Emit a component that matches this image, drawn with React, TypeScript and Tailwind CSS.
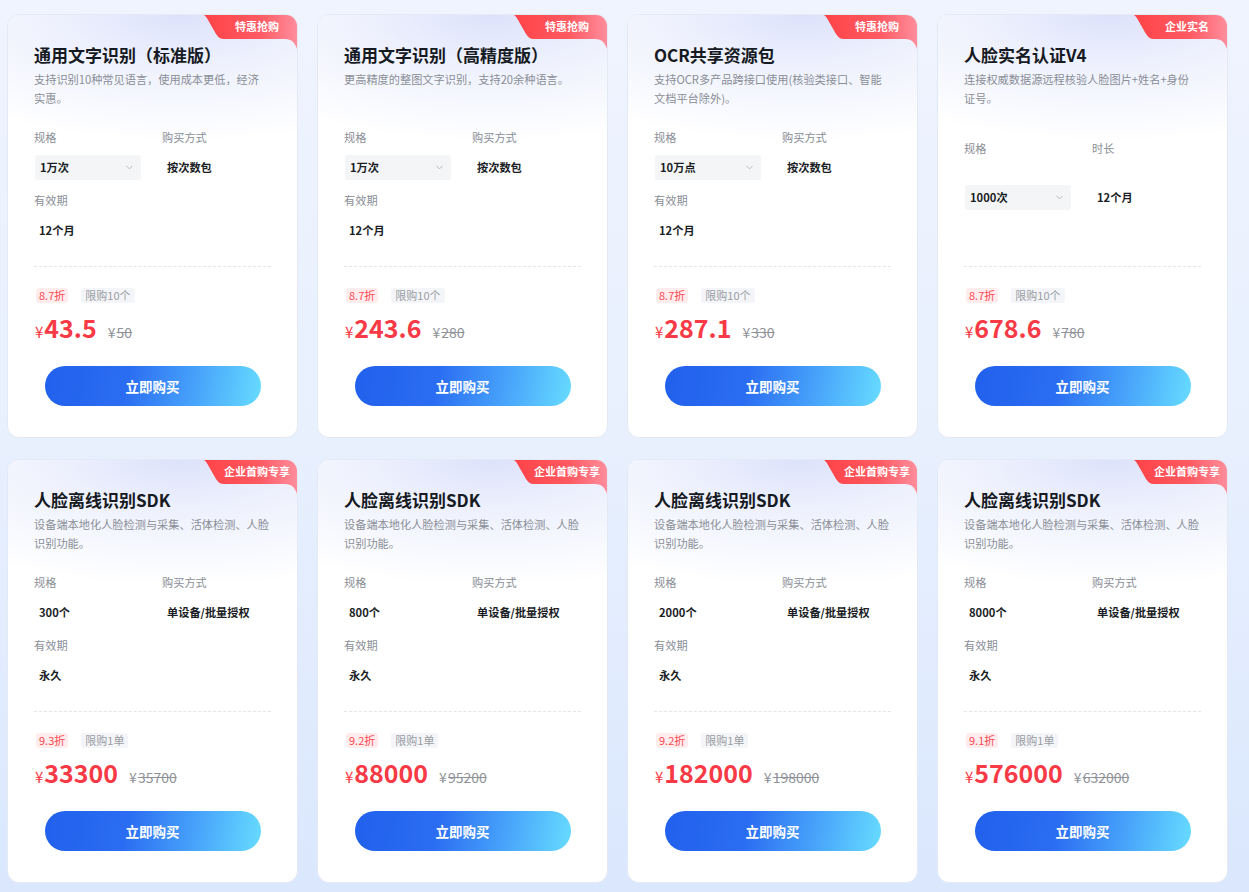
import { ChevronDown } from "lucide-react";

/* ─── product data ─── */
type Product = {
  badge: string;
  title: string;
  desc: string;
  specs: { label: string; value: string; select?: boolean }[];
  discount: string;
  limit: string;
  price: string;
  origin: string;
  wide?: boolean;
};

const products: Product[] = [
  {
    badge: "特惠抢购",
    title: "通用文字识别（标准版）",
    desc: "支持识别10种常见语言，使用成本更低，经济实惠。",
    specs: [
      { label: "规格", value: "1万次", select: true },
      { label: "购买方式", value: "按次数包" },
      { label: "有效期", value: "12个月" },
    ],
    discount: "8.7折",
    limit: "限购10个",
    price: "43.5",
    origin: "50",
  },
  {
    badge: "特惠抢购",
    title: "通用文字识别（高精度版）",
    desc: "更高精度的整图文字识别，支持20余种语言。",
    specs: [
      { label: "规格", value: "1万次", select: true },
      { label: "购买方式", value: "按次数包" },
      { label: "有效期", value: "12个月" },
    ],
    discount: "8.7折",
    limit: "限购10个",
    price: "243.6",
    origin: "280",
  },
  {
    badge: "特惠抢购",
    title: "OCR共享资源包",
    desc: "支持OCR多产品跨接口使用(核验类接口、智能文档平台除外)。",
    specs: [
      { label: "规格", value: "10万点", select: true },
      { label: "购买方式", value: "按次数包" },
      { label: "有效期", value: "12个月" },
    ],
    discount: "8.7折",
    limit: "限购10个",
    price: "287.1",
    origin: "330",
  },
  {
    badge: "企业实名",
    title: "人脸实名认证V4",
    desc: "连接权威数据源远程核验人脸图片+姓名+身份证号。",
    specs: [
      { label: "规格", value: "1000次", select: true },
      { label: "时长", value: "12个月" },
    ],
    discount: "8.7折",
    limit: "限购10个",
    price: "678.6",
    origin: "780",
    wide: true,
  },
  ...[
    ["300个", "9.3折", "33300", "35700"],
    ["800个", "9.2折", "88000", "95200"],
    ["2000个", "9.2折", "182000", "198000"],
    ["8000个", "9.1折", "576000", "632000"],
  ].map(([spec, discount, price, origin]) => ({
    badge: "企业首购专享",
    title: "人脸离线识别SDK",
    desc: "设备端本地化人脸检测与采集、活体检测、人脸识别功能。",
    specs: [
      { label: "规格", value: spec },
      { label: "购买方式", value: "单设备/批量授权" },
      { label: "有效期", value: "永久" },
    ],
    discount,
    limit: "限购1单",
    price,
    origin,
  })),
];

/* ─── corner ribbon ─── */
function Ribbon({ text }: { text: string }) {
  return (
    <div className="absolute right-0 top-0 w-[94px] h-[34px]">
      <svg width="94" height="34" viewBox="0 0 94 34" className="absolute inset-0">
        <defs>
          <linearGradient id="rib" x1="0" y1="0" x2="1" y2="0">
            <stop offset="0" stopColor="#ff4347" />
            <stop offset="0.6" stopColor="#ff5a62" />
            <stop offset="1" stopColor="#ff8d9c" />
          </linearGradient>
        </defs>
        <path
          d="M0 0 H94 V34 C92 28 89 24 82 24 H21 C17 24 15 22 13 19 L5 5 C3.5 2 2 0 0 0 Z"
          fill="url(#rib)"
        />
      </svg>
      <div className="absolute left-[14px] right-0 top-0 h-[22px] flex items-center justify-center text-white text-[11px] font-bold leading-none">
        {text}
      </div>
    </div>
  );
}

/* ─── single card ─── */
function ProductCard({ p }: { p: Product }) {
  return (
    <div className="relative h-[424px] rounded-[12px] bg-white border border-[#e4eaf5] overflow-hidden">
      <div className="absolute inset-x-0 top-0 h-[150px] bg-[radial-gradient(ellipse_110%_85%_at_60%_0%,#dce2fb_0%,#eef1fd_40%,#ffffff_100%)]" />
      <Ribbon text={p.badge} />

      <div className="relative flex flex-col px-[26px] pt-[28px]">
        <h3 className="text-[17px] leading-[24px] font-bold text-[#161a23]">{p.title}</h3>
        <p className="mt-[3px] h-[38px] w-[235.6px] text-[11.2px] leading-[19px] text-[#8a8e96]">{p.desc}</p>

        {/* specs */}
        <div className="h-[137px] mt-[21px]">
          <div
            className={`grid grid-cols-[128px_1fr] ${
              p.wide ? "pt-[11px] gap-y-[12px]" : "gap-y-[12px]"
            }`}
          >
            {p.specs.map((s) => (
              <div key={s.label} className={`flex flex-col ${p.wide ? "gap-[29px]" : "gap-[10px]"}`}>
                <span className="text-[11.2px] leading-[16px] text-[#8a8e96]">{s.label}</span>
                {s.select ? (
                  <div className="w-[106px] h-[25px] ml-px rounded-[3px] bg-[#f3f5f6] flex items-center justify-between pl-[5px] pr-[6px]">
                    <span className="text-[11.2px] font-bold text-[#1b1e25]">{s.value}</span>
                    <ChevronDown className="size-[11px] text-[#a3a7ae]" strokeWidth={1.6} />
                  </div>
                ) : (
                  <div className="h-[25px] flex items-center pl-[5px] text-[11.2px] font-bold text-[#1b1e25]">
                    {s.value}
                  </div>
                )}
              </div>
            ))}
          </div>
        </div>

        <div className="border-t border-dashed border-[#e2e5ea]" />

        {/* price */}
        <div className="mt-[21px] flex items-center gap-[13px] pl-[2px]">
          <span className="h-[15px] px-[3px] rounded-[3px] bg-[#ffeced] text-[#fb4a52] text-[11px] leading-[15px]">
            {p.discount}
          </span>
          <span className="h-[15px] px-[4px] rounded-[3px] bg-[#f4f5f8] text-[#9a9da3] text-[11px] leading-[15px]">
            {p.limit}
          </span>
        </div>
        <div className="mt-[8px] flex items-baseline pl-[1px] h-[32px]">
          <span className="text-[15px] text-[#f73a45] mr-[1px]">¥</span>
          <span className="text-[25px] font-bold text-[#f73a45] leading-[32px]">{p.price}</span>
          <span className="ml-[11px] mr-[1px] text-[14px] text-[#8f9299]">¥</span>
          <span className="text-[14px] text-[#8f9299] line-through">{p.origin}</span>
        </div>

        <button className="mt-[23px] self-center w-[216px] h-[40px] rounded-full bg-[linear-gradient(100deg,#2160ec_0%,#2b6df2_38%,#4aa8fb_72%,#67dcff_100%)] text-white text-[13.5px] font-bold">
          立即购买
        </button>
      </div>
    </div>
  );
}

export default function App() {
  return (
    <div
      className="min-h-[892px] w-full bg-[linear-gradient(180deg,#eff4fe_0%,#e8f0fe_50%,#dae7fd_100%)] pl-[7px] pt-[14px]"
      style={{ fontFamily: '"Noto Sans CJK SC", "Noto Sans", sans-serif' }}
    >
      <div className="grid grid-cols-[repeat(4,291px)] gap-x-[19px] gap-y-[21px]">
        {products.map((p, i) => (
          <ProductCard key={i} p={p} />
        ))}
      </div>
    </div>
  );
}
